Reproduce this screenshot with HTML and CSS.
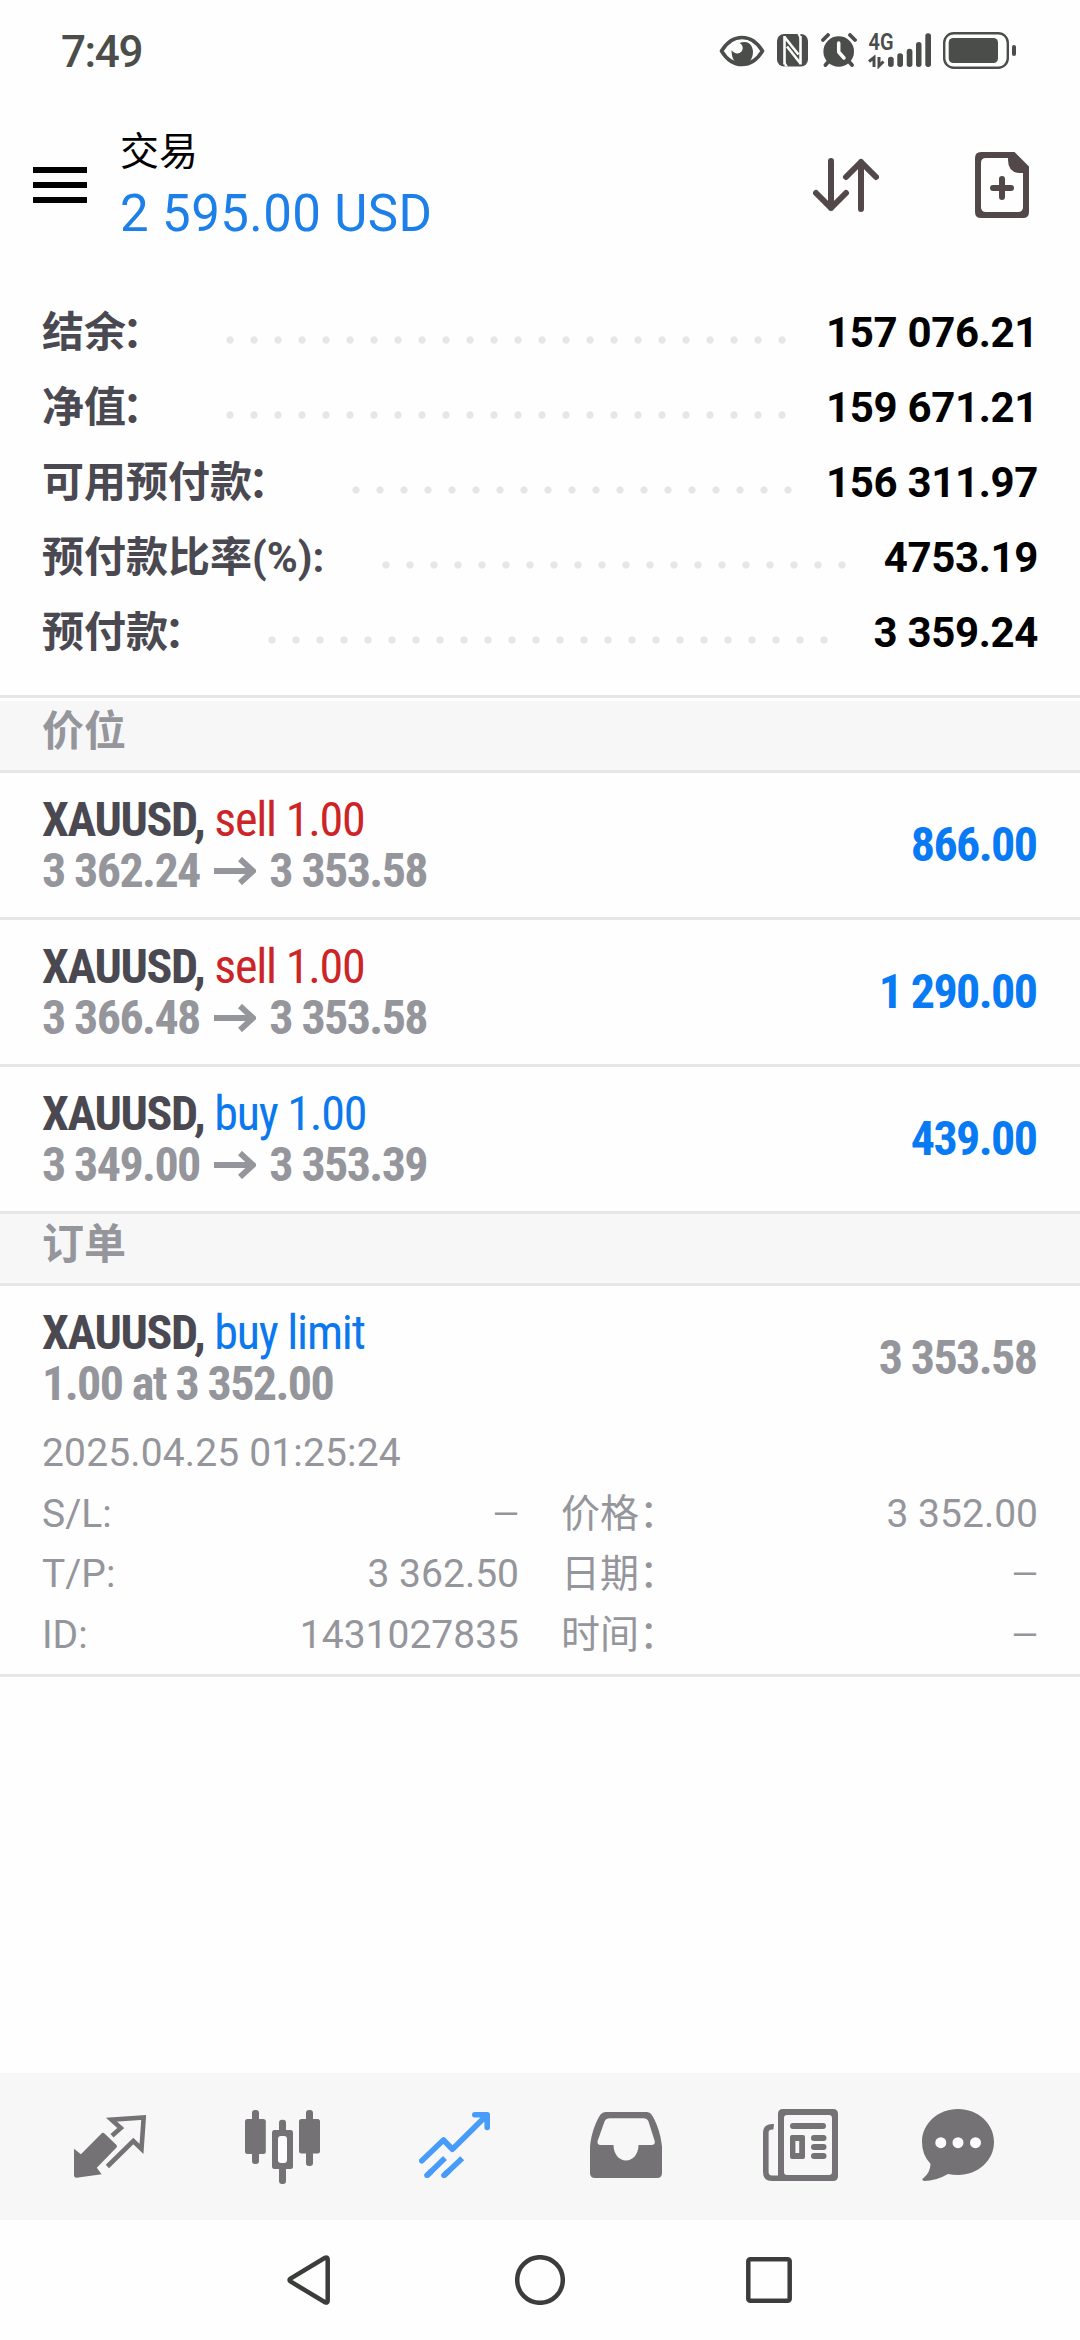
FILE: index.html
```html
<!DOCTYPE html>
<html lang="zh-CN">
<head>
<meta charset="utf-8">
<title>交易</title>
<link rel="stylesheet" href="styles.css">
</head>
<body>
<div class="status">
  <span class="clock">7:49</span>
  <svg class="eye" width="46" height="32" viewBox="0 0 46 32"><path d="M2.500 16C8 7 14.500 2.500 23 2.500S38 7 43.500 16C38 25 31.500 29.500 23 29.500S8 25 2.500 16Z" fill="none" stroke="currentColor" stroke-width="3.600" stroke-linejoin="round"/><path d="M20.500 8C29 4.500 34 10 34 17C34 24 29.500 29.500 23 29.500S12.500 24.500 12.500 15C15 19 20 19.500 22.500 16.500C25 13 23.500 9.500 20.500 8Z" fill="currentColor"/></svg>
  <svg class="nfc" width="31" height="33" viewBox="0 0 31 33"><rect width="31" height="32.500" rx="7" fill="currentColor"/><path d="M7.500 2V30.500M23.500 2V30.500M7.500 3L21.500 20.500M10 12.500L23.500 29.500" fill="none" stroke="#fefefe" stroke-width="2.600"/><path d="M20.500 0H23.500V6ZM7.500 27V32.500H11Z" fill="#fefefe"/></svg>
  <svg class="alarm" width="36" height="34" viewBox="0 0 36 34"><circle cx="17.700" cy="18.500" r="15.300" fill="currentColor"/><path d="M2 7L7 2M34 7L29 2M8 28L4.500 32M27.500 28L31 32" stroke="currentColor" stroke-width="3.800" stroke-linecap="round"/><path d="M17.700 10V19L23 25" fill="none" stroke="#fefefe" stroke-width="3.500" stroke-linecap="round" stroke-linejoin="round"/></svg>
  <svg class="signal" width="62" height="35" viewBox="0 0 62 35"><text x="-0.500" y="17" class="net" textLength="25" lengthAdjust="spacingAndGlyphs">4G</text><path d="M0 28.500L5 24.500V34M10 24V33L14.500 28.500" fill="none" stroke="currentColor" stroke-width="3"/><g fill="currentColor"><rect x="19" y="23.700" width="5.700" height="10.300" rx="2.700"/><rect x="28.300" y="20.300" width="5.700" height="13.700" rx="2.700"/><rect x="37.700" y="15.700" width="5.700" height="18.300" rx="2.700"/><rect x="47" y="9" width="5.500" height="25" rx="2.700"/><rect x="56.300" y="0.300" width="5.700" height="33.700" rx="2.700"/></g></svg>
  <svg class="battery" width="73" height="37" viewBox="0 0 73 37"><rect x="1.200" y="1.200" width="63.600" height="34.600" rx="9.500" fill="none" stroke="currentColor" stroke-width="2.400"/><rect x="5.700" y="6" width="49.300" height="25" rx="4.500" fill="currentColor"/><rect x="69" y="13" width="4" height="11" rx="2" fill="currentColor"/></svg>
</div>

<header class="header">
  <div class="menu"><i></i><i></i><i></i></div>
  <div class="title"><h1>交易</h1><p>2 595.00 USD</p></div>
  <svg class="sort" width="66" height="54" viewBox="0 0 66 54" fill="none" stroke="currentColor" stroke-width="6" stroke-linecap="round" stroke-linejoin="round"><path d="M18 3V50M3 35L18 50L33 35M48 51V4M33 19L48 4L63 19"/></svg>
  <svg width="54" height="66" viewBox="0 0 54 66"><path fill="currentColor" fill-rule="evenodd" d="M6 0H39.500L54 14.500V60Q54 66 48 66H6Q0 66 0 60V6Q0 0 6 0ZM11 6Q6 6 6 11V55Q6 60 11 60H43Q48 60 48 55V21H44Q33 20 33 8V6Z"/><path d="M27 27V45M18 36H36" stroke="currentColor" stroke-width="6" stroke-linecap="round"/></svg>
</header>

<section class="summary">
  <div class="sum"><span>结余<em>：</em></span><i></i><b>157 076.21</b></div>
  <div class="sum"><span>净值<em>：</em></span><i></i><b>159 671.21</b></div>
  <div class="sum"><span>可用预付款<em>：</em></span><i></i><b>156 311.97</b></div>
  <div class="sum"><span>预付款比率(%):</span><i></i><b>4753.19</b></div>
  <div class="sum"><span>预付款<em>：</em></span><i></i><b>3 359.24</b></div>
</section>

<h2 class="section first">价位</h2>
<div class="position">
  <div><p><b>XAUUSD,</b> <span class="sell">sell 1.00</span></p>
  <p class="quote">3 362.24<svg class="arrow" width="42" height="28" viewBox="0 0 42 28"><path d="M0 14H39M26 2L39 14L26 26"/></svg>3 353.58</p></div>
  <strong>866.00</strong>
</div>
<div class="position">
  <div><p><b>XAUUSD,</b> <span class="sell">sell 1.00</span></p>
  <p class="quote">3 366.48<svg class="arrow" width="42" height="28" viewBox="0 0 42 28"><path d="M0 14H39M26 2L39 14L26 26"/></svg>3 353.58</p></div>
  <strong>1 290.00</strong>
</div>
<div class="position">
  <div><p><b>XAUUSD,</b> <span class="buy">buy 1.00</span></p>
  <p class="quote">3 349.00<svg class="arrow" width="42" height="28" viewBox="0 0 42 28"><path d="M0 14H39M26 2L39 14L26 26"/></svg>3 353.39</p></div>
  <strong>439.00</strong>
</div>

<h2 class="section">订单</h2>
<article class="order">
  <div class="position head">
    <div><p><b>XAUUSD,</b> <span class="buy">buy limit</span></p>
    <p class="quote">1.00 at 3 352.00</p></div>
    <strong class="muted">3 353.58</strong>
  </div>
  <div class="details">
    <div class="date">2025.04.25 01:25:24</div>
    <div class="cell"><span>S/L:</span><span class="dash">—</span></div>
    <div class="cell"><span>价格：</span><span>3 352.00</span></div>
    <div class="cell"><span>T/P:</span><span>3 362.50</span></div>
    <div class="cell"><span>日期：</span><span class="dash">—</span></div>
    <div class="cell"><span>ID:</span><span>1431027835</span></div>
    <div class="cell"><span>时间：</span><span class="dash">—</span></div>
  </div>
</article>

<nav class="tabs">
  <a><svg width="72" height="63" viewBox="0 0 72 63"><path fill="currentColor" d="M0 33.700L6.900 39.300L27.500 18.500Q29 17 30.500 18.500L42.500 30Q43.500 31.300 42.500 32.500L22.800 52.700L27.600 59.300L2.500 62.800Q0 62.800 0 60Z"/><path fill="none" stroke="currentColor" stroke-width="4.600" d="M38 20.800L46.800 13L37.500 4.600L69.700 2.500L67.500 34L59.300 26L33.400 51.500"/></svg></a>
  <a><svg width="75" height="74" viewBox="0 0 75 74" fill="currentColor"><rect y="9" width="20.800" height="35" rx="2.500"/><rect x="7" width="7" height="54" rx="3"/><rect x="34" y="9.700" width="7" height="64.300" rx="3"/><rect x="27" y="20" width="21" height="39" rx="2.500"/><rect x="33" y="26" width="9" height="27" rx="3" class="cut"/><rect x="54" y="9" width="21" height="34.500" rx="2.500"/><rect x="61" width="7" height="56" rx="3"/></svg></a>
  <a class="active"><svg class="up" width="71" height="66" viewBox="0 0 71 66" fill="none" stroke="currentColor" stroke-width="5.600" stroke-linejoin="round"><path stroke-linecap="round" d="M2.800 48.700L24.500 28L33.400 37.300L67.500 3.500M55.800 2.800H68.200V15.500"/><path d="M26 46L8 63.500M43.200 46.300L25 63.500"/><path stroke-linecap="round" d="M12 59.700L8 63.300M29 59.700L25 63.300"/></svg></a>
  <a><svg class="up" width="72" height="66" viewBox="0 0 72 66"><path fill="currentColor" fill-rule="evenodd" d="M0 35C1 22 6 9 10.500 2.500Q12.500 0 15.500 0H57Q60 0 61.500 2.500C66 9 71 22 72 35V61Q72 66 67 66H5Q0 66 0 61ZM20 6.300Q16 6.300 14.500 9.500L7.600 29Q7 33 10.500 33H23.500C23.500 42 29 48.500 36 48.500S48.500 42 48.500 33H61.500Q65.500 33 64.700 29L58.500 9.500Q57 6.300 53.500 6.300Z"/></svg></a>
  <a><svg class="up news" width="75" height="72" viewBox="0 0 75 72"><path fill="currentColor" fill-rule="evenodd" d="M20 0H70Q75 0 75 5V67Q75 72 70 72H15V5Q15 0 20 0ZM24 6Q21 6 21 9V63Q21 66 24 66H66Q69 66 69 63V9Q69 6 66 6ZM29 26H40Q42 26 42 28V48Q42 50 40 50H29Q27 50 27 48V28Q27 26 29 26ZM32.400 32V44H36.200V32Z"/><path fill="none" stroke="currentColor" stroke-width="5.600" d="M10.700 17.800Q2.800 17 2.800 24V63Q2.800 69.200 9 69.200H18"/><path stroke="currentColor" stroke-width="6" stroke-linecap="round" d="M30 17H60M51 29H60.500M51 38H60.500M51 47H60.500"/></svg></a>
  <a><svg class="up chat" width="72" height="72" viewBox="0 0 72 72"><path fill="currentColor" d="M36 0C56 0 72 14.500 72 33S56 66 36 66Q31 66 26 65Q14 72 2 72Q-1 71 1.500 69Q8 64 8.600 55Q0 46 0 33C0 14.500 16 0 36 0Z"/><g class="cut"><circle cx="18.800" cy="33.700" r="5.500"/><circle cx="36" cy="33.700" r="5.500"/><circle cx="53.500" cy="33.700" r="5.500"/></g></svg></a>
</nav>
<footer class="sysnav">
  <svg width="43" height="50" viewBox="0 0 43 50"><path d="M38 2.800Q40.700 1.500 40.700 4.500V45.500Q40.700 48.500 38 47.200L3.500 26.500Q1.500 25 3.500 23.500Z"/></svg>
  <svg class="home" width="50" height="50" viewBox="0 0 50 50"><circle cx="25" cy="25" r="22.800"/></svg>
  <svg width="46" height="46" viewBox="0 0 46 46"><rect x="2.300" y="2.300" width="41.400" height="41.400" rx="2"/></svg>
</footer>
</body>
</html>
```
FILE: styles.css
```css
* { box-sizing: border-box; margin: 0; padding: 0; }
body {
  width: 1080px;
  height: 2340px;
  display: flex;
  flex-direction: column;
  background: #fefefe;
  font-family: Roboto, "Noto Sans CJK SC", sans-serif;
  overflow: hidden;
}
svg { display: block; flex: none; }
.cut { fill: #fefefe; }

.status {
  height: 104px;
  padding-left: 61px;
  display: flex;
  align-items: flex-start;
  color: #4b4d4b;
}
.clock { width: 658px; padding-top: 21px; font-size: 44px; line-height: 62px; font-weight: 500; letter-spacing: -1.4px; }
.eye { margin-top: 35px; }
.nfc { margin: 34px 0 0 12px; }
.alarm { margin: 33px 0 0 13px; }
.signal { margin: 33px 0 0 12px; overflow: visible; }
.net { font-size: 24px; font-weight: 600; fill: currentColor; }
.battery { margin: 32px 0 0 12px; }

.header {
  height: 162px;
  padding: 0 51px 0 33px;
  display: flex;
  align-items: center;
  color: #524849;
}
.menu { width: 54px; display: grid; gap: 9px; }
.menu i { height: 6px; background: #000; }
.title { flex: 1; margin: -2px 0 0 33px; }
.title h1 { font-size: 39px; line-height: 59px; font-weight: 400; color: #000; }
.title p { font-size: 51px; line-height: 63px; color: #1d7fe8; letter-spacing: 0.4px; }
.sort { margin-right: 96px; }

.summary { height: 432px; padding: 29px 42px 0; border-bottom: 3px solid #e6e6e6; }
.sum { height: 75px; display: flex; font-size: 42px; line-height: 75px; }
.sum span { font-weight: 700; color: #4a4850; white-space: nowrap; }
.sum em { margin: 0 4px 0 -4px; font-style: normal; }
.sum i {
  flex: 1;
  height: 8px;
  margin: 41px 30px 0 50px;
  background: radial-gradient(circle, #e6e6e6 3.300px, transparent 4px) repeat-x 0 0 / 24px 8px;
}
.sum b { font-weight: 700; color: #000; letter-spacing: -0.350px; }

.section {
  height: 72px;
  padding-left: 42px;
  background: #f7f7f7;
  border-bottom: 3px solid #e6e6e6;
  font-size: 42px;
  line-height: 61px;
  font-weight: 700;
  color: #95959c;
}
.section.first { margin-top: 3px; }

.position {
  height: 147px;
  padding: 21px 42px;
  display: flex;
  justify-content: space-between;
  align-items: center;
  border-bottom: 3px solid #e6e6e6;
  font-family: "Roboto Condensed", Roboto, sans-serif;
  font-stretch: 75%;
  font-size: 48px;
  line-height: 51px;
  letter-spacing: -1.200px;
}
.position b { font-weight: 700; color: #4a4850; letter-spacing: -1.350px; }
.sell { color: #cc2427; }
.buy { color: #0b78ee; }
.quote { display: flex; align-items: center; font-weight: 700; color: #95959c; white-space: pre; letter-spacing: -1.600px; }
.arrow { margin: 0 13px 0 14.500px; fill: none; stroke: currentColor; stroke-width: 5.800; }
.position strong { margin: -1px 1.600px 0 0; font-weight: 700; color: #077af4; letter-spacing: -1.600px; }
.position .muted { color: #95959c; }

.order { height: 391px; border-bottom: 3px solid #e6e6e6; }
.head { height: 136px; padding-bottom: 13px; border: 0; }
.details {
  padding: 1px 42px 0;
  display: grid;
  grid-template-columns: 1fr 1fr;
  grid-auto-rows: 60.700px;
  column-gap: 42px;
  font-size: 39px;
  line-height: 60.700px;
  color: #95959c;
}
.date { grid-column: 1 / 3; letter-spacing: 0.150px; }
.cell { display: flex; justify-content: space-between; }
.dash { font-size: 34px; }

.tabs {
  height: 147px;
  margin-top: auto;
  padding: 0 24px;
  display: flex;
  background: #f7f7f7;
  color: #747274;
}
.tabs a { flex: 1; display: flex; align-items: center; justify-content: center; }
.tabs .active { color: #479bf9; }
.up { margin-bottom: 3px; }
.news { margin-left: 4px; }
.chat { margin-right: 24px; }

.sysnav { height: 120px; padding-left: 287px; display: flex; align-items: center; }
.sysnav svg { fill: none; stroke: #3b3d3b; stroke-width: 4.500; }
.sysnav .home { margin: 0 181px 0 185px; }
```
